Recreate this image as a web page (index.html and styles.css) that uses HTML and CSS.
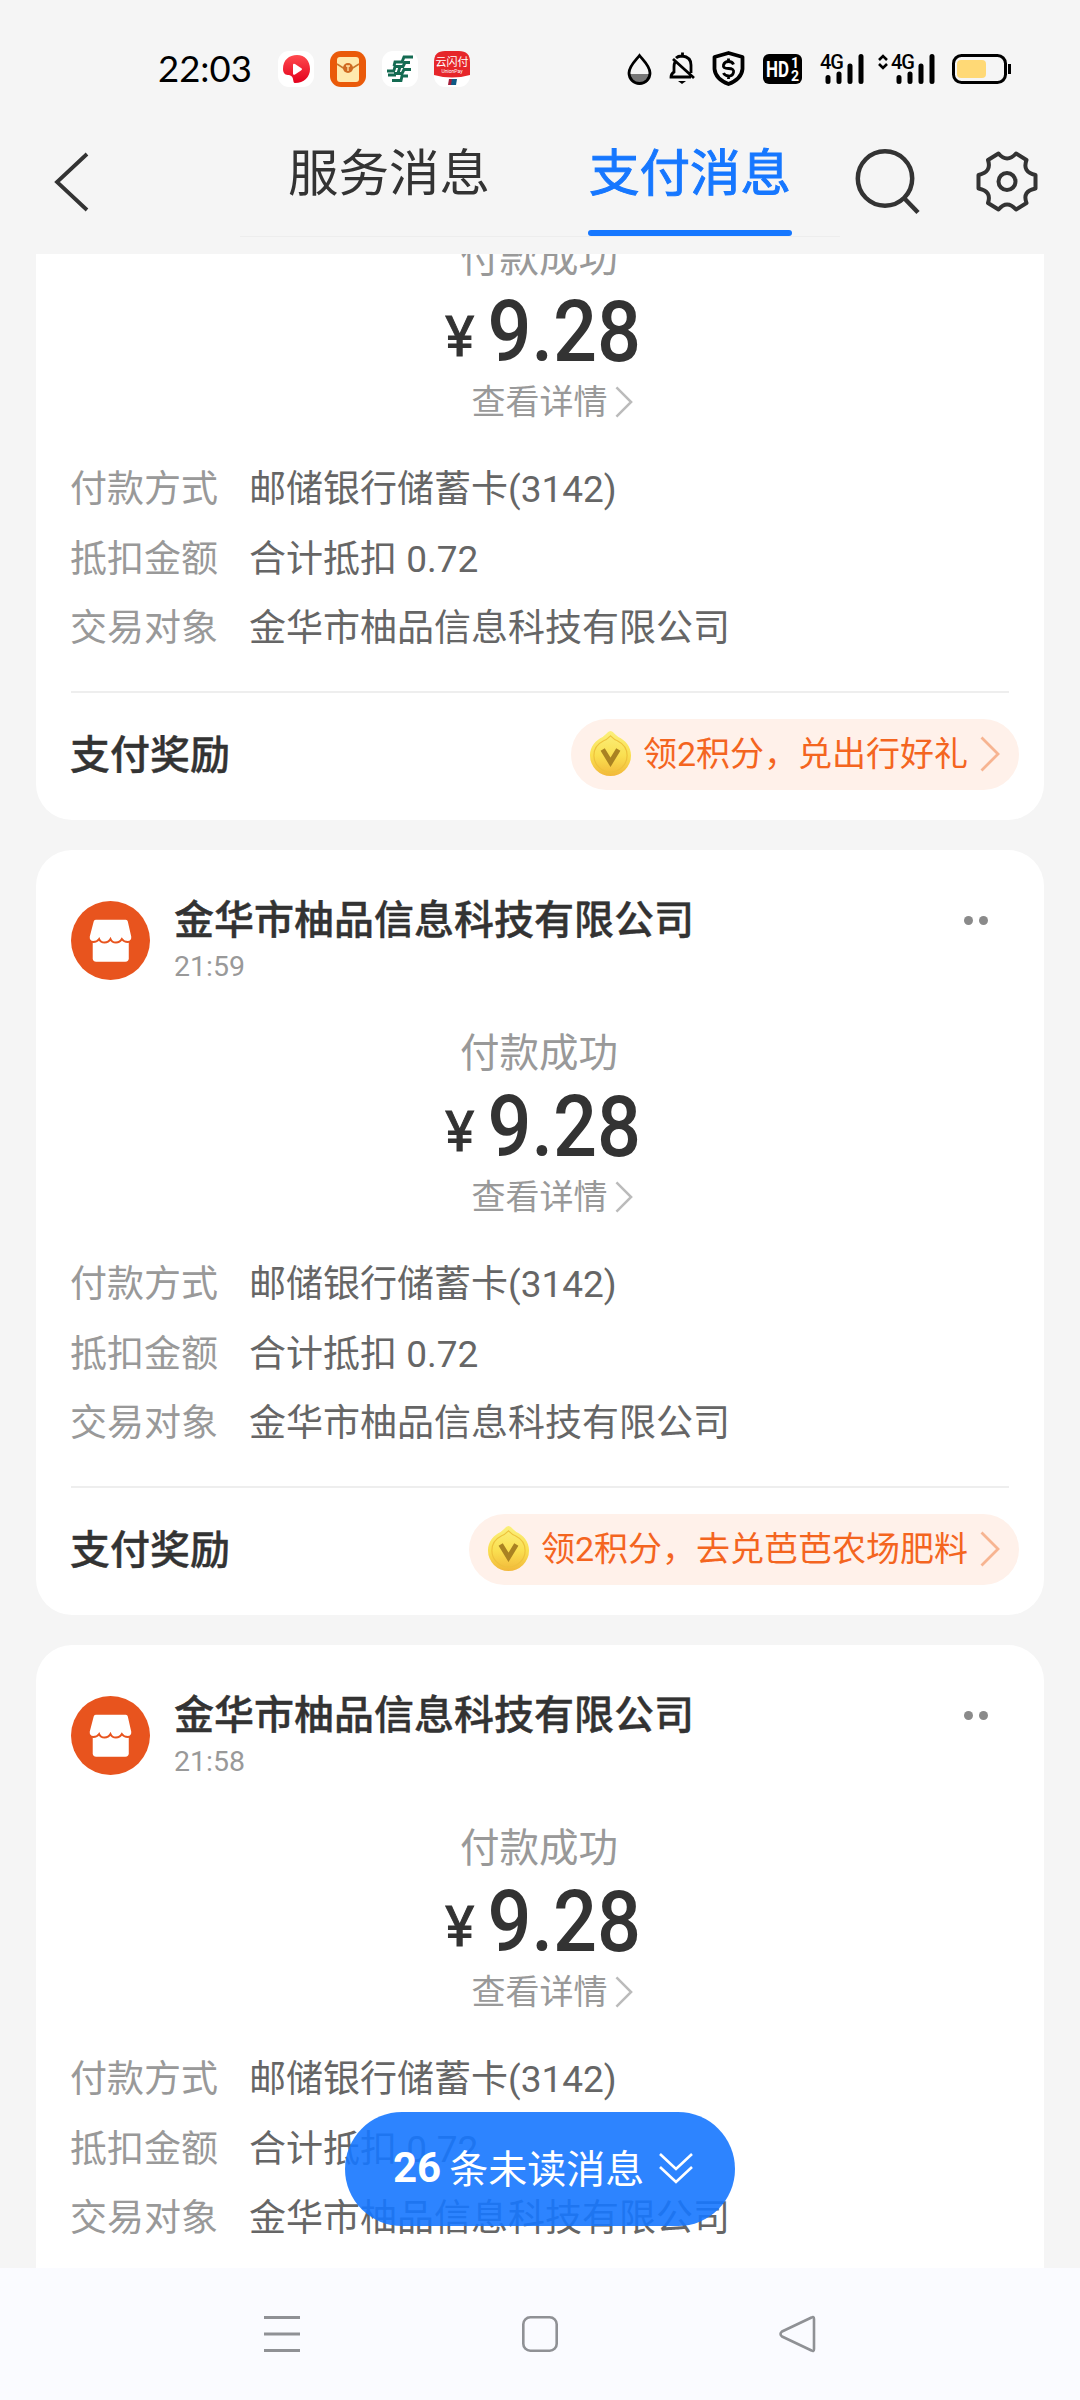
FILE: index.html
```html
<!DOCTYPE html>
<html lang="zh-CN">
<head>
<meta charset="utf-8">
<title>支付消息</title>
<link rel="stylesheet" href="styles.css">
</head>
<body>
<svg class="defs" aria-hidden="true">
  <defs>
    <linearGradient id="gold" x1="0" y1="0" x2="0" y2="1"><stop offset="0" stop-color="#fbf07c"/><stop offset=".55" stop-color="#fadf50"/><stop offset="1" stop-color="#f2b83a"/></linearGradient>
    <linearGradient id="redg" x1="0" y1="0" x2="0" y2="1"><stop offset="0" stop-color="#ff4a4e"/><stop offset="1" stop-color="#e3001c"/></linearGradient>
  </defs>
  <symbol id="coin" viewBox="0 0 44 48">
    <path d="M22 1c2 0 4 3 8 6 7 3 13 10 13 19a21 21 0 0 1-42 0C1 17 7 10 14 7c4-3 6-6 8-6z" fill="url(#gold)"/>
    <path d="M22 6c2 2 4 4 7 5 6 3 10 8 10 15a17 17 0 0 1-34 0c0-7 4-12 10-15 3-1 5-3 7-5z" fill="none" stroke="#eec23c" stroke-width="1.2"/>
    <path d="M14 20l8 13 8-13" fill="none" stroke="#a98222" stroke-width="5"/>
  </symbol>
  <symbol id="shop" viewBox="0 0 80 80">
    <circle cx="40" cy="40" r="40" fill="#e8541e"/>
    <path d="M22 38h36.500v20q0 3.500-3.500 3.500H25.500q-3.500 0-3.500-3.500z" fill="#fff"/>
    <path d="M25 18h30.500q2.500 0 3 2.500L62 36q.5 5-4.500 5.500-4 0-6-3-2 3.500-6 3.500t-5.500-3.500q-2 3.500-6 3.500t-5.500-3.500q-2 3-6 3-5-.5-4.500-5.500L22 20.500q.5-2.500 3-2.500z" fill="#fff" stroke="#e8541e" stroke-width="2"/>
  </symbol>
  <symbol id="chev" viewBox="0 0 20 36"><path d="M1.500 1.500L18 18 1.500 34.500" fill="none" stroke="currentColor" stroke-width="2.800"/></symbol>
</svg>

<div class="status">
  <span class="clock">22:03</span>
  <div class="apps">
    <svg width="36" height="36" viewBox="0 0 36 36"><rect width="36" height="36" rx="11" fill="#fff"/><path d="M5 18C5 9 11 4 19 4s13 6 13 14-6 14-15 14c-3 0 0-7-6-8-3 0-6-1-6-6z" fill="url(#redg)"/><path d="M15 14q0-2 2-1l6 4q2 1 0 2.500l-6 4q-2 1-2-1z" fill="#fff"/></svg>
    <svg width="36" height="36" viewBox="0 0 36 36"><rect width="36" height="36" rx="11" fill="#ea5a0a"/><rect x="7" y="6" width="22" height="25" rx="3" fill="#ffe9ae"/><path d="M7 13l11 7 11-7" fill="none" stroke="#c9772c" stroke-width="1.500"/><circle cx="18" cy="17" r="5" fill="#d06a22"/><path d="M16 15h4M18 15v5" stroke="#ffe0a0" stroke-width="1.300"/></svg>
    <svg width="36" height="36" viewBox="0 0 36 36" fill="none" stroke="#146b52"><rect width="36" height="36" rx="11" fill="#fff" stroke="none"/><path d="M31 6H22l-2 5h-7l-1 4M28 11.500h-5l-2 4h-8l-1 4M29 18.500h-7l-2 4h-8M18 16l-2 6M5 20h8M6 24h8M26 25h-6l-1 4.500h-9" stroke-width="2.900"/></svg>
    <svg width="36" height="36" viewBox="0 0 36 36"><rect width="36" height="36" rx="11" fill="#fff"/><path d="M0 24V11Q0 0 11 0h14q11 0 11 11v13q-18 5-36 0z" fill="#e6262a"/><text x="18" y="15" class="up">云闪付</text><text x="18" y="21.500" class="up2">UnionPay</text><path d="M15 28h4l-1 6h-4z" fill="#a31f3b"/><path d="M18 28h5l-1 6h-5z" fill="#0e5a86"/></svg>
  </div>
  <svg class="sys" width="390" height="40" viewBox="0 0 390 40" fill="none" stroke="#000">
    <path d="M2.500 24h21a10.500 10.500 0 0 1-21 0z" fill="#777" stroke="none"/>
    <path d="M12.500 5.500C9 10 2 16 2 23a10.500 10.500 0 0 0 21 0C23 16 16 10 12.500 5.500z" stroke-width="2.800"/>
    <path d="M49 8q2-2 6-2 9 1 9 9v8M48 12q-1 2-1 5v5q-3 2-3 5h20M46 9l21 19M55.500 2.500v3" stroke-width="2.800"/><path d="M51 31h8l-4 3z" fill="#000" stroke="none"/>
    <path d="M101.500 3l14 4v12q-1 10-14 15-13-5-14-15V7z" stroke-width="3.800" stroke-linejoin="round"/>
    <path d="M106.500 14.500q-1-3-5-3t-5 3.500 5 3.500 5 4-5 3.500-5-3M101.500 8.500v3M101.500 26v3" stroke-width="2.800"/>
    <rect x="136" y="4" width="39" height="30" rx="6" fill="#000" stroke="none"/>
    <text x="139" y="27" class="hd" textLength="23" lengthAdjust="spacingAndGlyphs">HD</text><text x="164" y="18" class="hn">1</text><text x="164" y="31" class="hn">2</text>
    <text x="193" y="19" class="g">4G</text><text x="264" y="19" class="g">4G</text>
    <path d="M201 27.500v4M212 24v7.500M223 16v15.500M234 6.500v25M272 27.500v4M283 24v7.500M294 16v15.500M305 6.500v25" stroke-width="5" stroke-linecap="round"/>
    <path d="M252 10l4-4 4 4M252 14l4 4 4-4" stroke-width="2.600"/>
    <rect x="330" y="10" width="29" height="18" rx="4" fill="#ffd976" stroke="none"/><rect x="326.500" y="5.500" width="52" height="27" rx="8" stroke-width="3"/>
    <path d="M382.500 14v10" stroke-width="3"/>
  </svg>
</div>

<div class="header">
  <svg class="back" width="36" height="60" viewBox="0 0 36 60"><path d="M33 2L3 30l30 28" fill="none" stroke="#333" stroke-width="3.800"/></svg>
  <div class="tabs">
    <span class="tab">服务消息</span>
    <span class="tab active">支付消息</span>
  </div>
  <svg class="search" width="66" height="68" viewBox="0 0 66 68" fill="none" stroke="#333" stroke-width="4.500"><circle cx="30" cy="30.500" r="27.200"/><path d="M49 50l14 14.500"/></svg>
  <svg class="gear" width="62" height="63" viewBox="0 0 62 63" fill="none" stroke="#333" stroke-width="4"><path d="M12 10L22.500 3.500Q31 13.500 40 3.500L50.500 10Q46 22 59.500 25V38.500Q46 41 50.500 53L40 59.500Q31 49.500 22.500 59.500L12 53Q16 41 2.500 38.500V25Q16 22 12 10z" stroke-linejoin="round"/><circle cx="31" cy="31.500" r="8.500"/></svg>
</div>

<div class="list">
  <div class="card first">
    <div class="state">付款成功</div>
    <div class="amount"><span class="yen">¥</span><span class="num">9.28</span></div>
    <div class="detail">查看详情<svg class="c1"><use href="#chev"/></svg></div>
    <div class="rows"><span>付款方式</span><b>邮储银行储蓄卡(3142)</b><span>抵扣金额</span><b>合计抵扣 0.72</b><span>交易对象</span><b>金华市柚品信息科技有限公司</b></div>
    <div class="reward"><span class="rt">支付奖励</span><span class="pill"><svg class="coin"><use href="#coin"/></svg>领2积分，兑出行好礼<svg class="c2"><use href="#chev"/></svg></span></div>
  </div>
  <div class="card">
    <div class="head"><svg class="avatar"><use href="#shop"/></svg><div class="who"><span class="name">金华市柚品信息科技有限公司</span><span class="time">21:59</span></div><span class="more"><i></i><i></i></span></div>
    <div class="state">付款成功</div>
    <div class="amount"><span class="yen">¥</span><span class="num">9.28</span></div>
    <div class="detail">查看详情<svg class="c1"><use href="#chev"/></svg></div>
    <div class="rows"><span>付款方式</span><b>邮储银行储蓄卡(3142)</b><span>抵扣金额</span><b>合计抵扣 0.72</b><span>交易对象</span><b>金华市柚品信息科技有限公司</b></div>
    <div class="reward"><span class="rt">支付奖励</span><span class="pill"><svg class="coin"><use href="#coin"/></svg>领2积分，去兑芭芭农场肥料<svg class="c2"><use href="#chev"/></svg></span></div>
  </div>
  <div class="card">
    <div class="head"><svg class="avatar"><use href="#shop"/></svg><div class="who"><span class="name">金华市柚品信息科技有限公司</span><span class="time">21:58</span></div><span class="more"><i></i><i></i></span></div>
    <div class="state">付款成功</div>
    <div class="amount"><span class="yen">¥</span><span class="num">9.28</span></div>
    <div class="detail">查看详情<svg class="c1"><use href="#chev"/></svg></div>
    <div class="rows"><span>付款方式</span><b>邮储银行储蓄卡(3142)</b><span>抵扣金额</span><b>合计抵扣 0.72</b><span>交易对象</span><b>金华市柚品信息科技有限公司</b></div>
  </div>
</div>

<div class="unread"><strong>26</strong><span>条未读消息</span><svg width="36" height="34" viewBox="0 0 36 34" fill="none" stroke="#fff" stroke-width="2.600"><path d="M2 2l16 15L34 2M2 15l16 15 16-15"/></svg></div>

<div class="navbar">
  <svg width="38" height="38" viewBox="0 0 38 38" stroke="#8f9195" stroke-width="3"><path d="M1 2.500h36M1 19h36M1 35.500h36"/></svg>
  <svg width="38" height="38" viewBox="0 0 38 38" fill="none" stroke="#8f9195" stroke-width="2.600"><rect x="2.300" y="2.300" width="33.400" height="33.400" rx="7"/></svg>
  <svg width="38" height="38" viewBox="0 0 38 38" fill="none" stroke="#8f9195" stroke-width="2.600" stroke-linejoin="round"><path d="M32.500 2.500q2.500-1.500 2.500 1.500v30q0 3-2.500 1.500L3 21.500q-3-2.500 0-5z"/></svg>
</div>
</body>
</html>
```
FILE: styles.css
```css
* { box-sizing: border-box; }
body {
  margin: 0;
  width: 1080px;
  height: 2400px;
  overflow: hidden;
  position: relative;
  display: flex;
  flex-direction: column;
  background: #f5f5f5;
  font-family: Roboto, "Noto Sans CJK SC", sans-serif;
  color: #333;
}
svg { display: block; flex: none; }
.defs { position: absolute; width: 0; height: 0; }

.status { height: 128px; padding: 0 63px 0 158px; display: flex; align-items: center; }
.clock { font: 36.500px/40px Lato, sans-serif; color: #000; width: 120px; margin-top: 8px; }
.apps { display: flex; gap: 16px; margin-top: 9px; }
.sys { margin: 11px 0 0 auto; }
.up { font: 11px "Noto Sans CJK SC", sans-serif; fill: #fff; text-anchor: middle; }
.up2 { font: 5px Roboto, sans-serif; fill: #fff; text-anchor: middle; }
.hd { font: 700 22px Roboto, sans-serif; fill: #fff; stroke: none; }
.hn { font: 700 14px Roboto, sans-serif; fill: #fff; stroke: none; }
.g { font: 500 20px Roboto, sans-serif; fill: #000; stroke: none; letter-spacing: -1px; }

.header { height: 126px; display: flex; align-items: flex-start; padding-left: 54px; }
.back { margin-top: 24px; }
.tabs { width: 600px; height: 109px; margin-left: 150px; border-bottom: 1px solid #ededed; display: flex; padding-left: 47px; gap: 97px; }
.tab { width: 204px; height: 108px; font-size: 50.500px; line-height: 92px; text-align: center; white-space: nowrap; }
.tab.active { color: #1677ff; -webkit-text-stroke: 1px #1677ff; position: relative; }
.tab.active::after { content: ""; position: absolute; left: 0; bottom: 0; width: 204px; height: 6px; border-radius: 3px; background: #1677ff; }
.search { margin: 20px 0 0 15px; }
.gear { margin: 22px 0 0 55px; }

.list { height: 2014px; overflow: hidden; padding: 0 36px; }
.card { height: 765px; margin-bottom: 30px; background: #fff; border-radius: 36px; padding: 51px 25px 0 35px; }
.card.first { display: flow-root; height: 566px; padding-top: 0; border-radius: 0 0 36px 36px; }
.card.first .state { margin-top: -24px; }
.head { display: flex; height: 124px; }
.avatar { width: 79px; height: 79px; }
.who { display: flex; flex-direction: column; margin-left: 24px; }
.name { font-size: 40px; line-height: 40px; font-weight: 500; -webkit-text-stroke: .4px #333; }
.time { font-size: 28.500px; line-height: 32px; color: #999; margin-top: 10px; }
.more { display: flex; gap: 6px; margin: 15px 31px 0 auto; }
.more i { width: 9px; height: 9px; border-radius: 50%; background: #8a8a8a; }
.state { font-size: 39.500px; line-height: 58px; height: 56px; color: #999; text-align: center; margin-right: 12px; }
.amount { height: 84px; display: flex; justify-content: center; align-items: baseline; line-height: 84px; font-weight: 500; margin-top: 4px; }
.yen { font-size: 55px; position: relative; top: -5px; left: -1px; font-weight: 400; -webkit-text-stroke: 1px #333; }
.num { font-size: 86px; transform: scaleX(.9); margin: 0 -6px 0 4px; }
.detail { display: flex; justify-content: center; align-items: center; font-size: 34px; line-height: 42px; height: 40px; color: #999; margin: 8px -14px 0 0; }
.c1 { width: 18px; height: 32px; margin-left: 7px; color: #bbb; }
.rows { display: grid; grid-template-columns: 179px 1fr; font-size: 37px; line-height: 69.500px; margin: 33px 0 0 -1px; }
.rows span { color: #999; }
.rows b { font-weight: 400; color: #666; white-space: nowrap; }
.reward { border-top: 2px solid #eee; margin: 27px 10px 0 0; height: 126px; display: flex; align-items: center; justify-content: space-between; }
.rt { font-size: 40px; font-weight: 500; margin: -5px 0 0 -1px; -webkit-text-stroke: .4px #333; }
.pill { height: 71px; border-radius: 36px; background: #fff1ea; display: flex; align-items: center; color: #f4651f; font-size: 34px; line-height: 40px; white-space: nowrap; padding: 0 19px 2px 18px; margin-right: -10px; }
.coin { width: 43px; height: 47px; margin-right: 11px; }
.c2 { width: 20px; height: 36px; margin-left: 12px; color: #f7b491; }

.unread { position: absolute; left: 345px; top: 2112px; width: 390px; height: 114px; border-radius: 57px; background: rgba(22, 119, 255, .9); color: #fff; display: flex; align-items: center; padding: 0 0 4px 48px; font-size: 39px; }
.unread strong { font-size: 42px; font-weight: 700; margin-right: 8px; }
.unread span { margin-top: -2px; }
.unread svg { margin: 3px 0 0 14px; }

.navbar { height: 132px; background: #fafbff; display: flex; justify-content: center; gap: 220px; padding-top: 47px; }
```
